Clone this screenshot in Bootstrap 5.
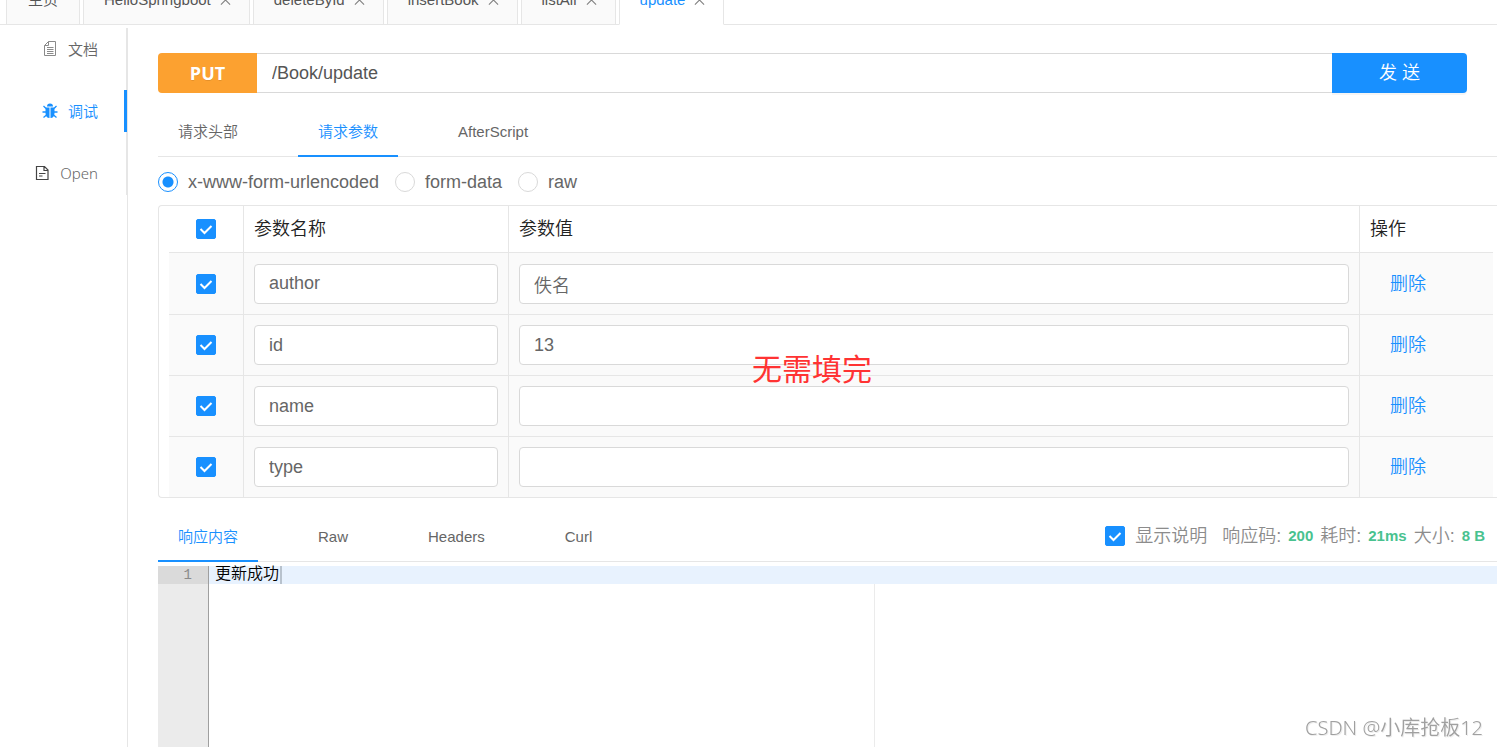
<!DOCTYPE html>
<html lang="zh-CN">
<head>
<meta charset="utf-8">
<meta name="viewport" content="width=device-width, initial-scale=1">
<title>update</title>
<link href="https://cdn.jsdelivr.net/npm/bootstrap@5.3.0/dist/css/bootstrap.min.css" rel="stylesheet">
<style>
:root { --ui-blue: #1890ff; --ui-line: #e6e6e6; --ui-text: #666; }
body { font-family: "Liberation Sans", "Noto Sans CJK SC", sans-serif; font-size: 18px; line-height: 24px; font-weight: 350; color: var(--ui-text); background: #fff; }
a { color: inherit; text-decoration: none; }
.shell { height: 100vh; overflow: hidden; }

/* open documents, scrolled half out of view */
.doc-bar { height: 25px; overflow: hidden; padding-left: 6px; font-size: 15px; background: linear-gradient(var(--ui-line), var(--ui-line)) bottom / 100% 1px no-repeat; }
.doc-tabs { height: 50px; gap: 3px; }
.doc-tab { height: 50px; padding: 0 18px 0 20px; border: 1px solid var(--ui-line); background: #fafafa; gap: 9px; white-space: nowrap; color: #555; }
.doc-tab.home { padding: 0 21px; }
.doc-tab.current { background: #fff; color: var(--ui-blue); border-bottom-color: #fff; }
.close-x { width: 11px; height: 12px; padding: 0; border: 0; background: none; color: #808080; line-height: 0; }

.side { width: 128px; border-right: 1px solid var(--ui-line); margin-top: 3px; }
.side-menu { border-right: 1px solid var(--ui-line); padding-bottom: 1px; gap: 20px; }
.side-link { height: 42px; gap: 10px; margin-right: -1px; padding-right: 26px; font-size: 15px; border-right: 3px solid transparent; font-family: "Noto Sans", "Noto Sans CJK SC", sans-serif; }
.side-link.current { color: var(--ui-blue); border-right-color: var(--ui-blue); }

.work { padding-left: 30px; min-width: 0; }
.url-row { margin: 28px 30px 14px 0; height: 40px; }
.method { width: 99px; background: #fca130; color: #fff; font: 700 18px/24px "Open Sans", sans-serif; border-radius: 4px 0 0 4px; text-shadow: 0 1px 0 rgba(0,0,0,.1); }
.url-box { border: 1px solid #d9d9d9; border-width: 1px 0; padding: 0 15px; min-width: 0; color: #555; font-weight: 350; }
.send { width: 135px; border: 0; border-radius: 0 4px 4px 0; background: var(--ui-blue); color: #fff; box-shadow: 0 2px 0 rgba(0,0,0,.04); font-weight: 350; font-size: 18px; }

.tab-row { height: 50px; border-bottom: 1px solid var(--ui-line); gap: 40px; font-size: 15px; }
.tab-link { padding: 2px 20px 0; height: 50px; border-bottom: 2px solid transparent; white-space: nowrap; }
.tab-link.current { color: var(--ui-blue); border-color: var(--ui-blue); }

.modes { height: 48px; padding-top: 2px; gap: 16px; }
.modes label, .status label { gap: 10px; }
.modes .form-check-input, .tick { width: 20px; height: 20px; margin: 0; flex: none; border-color: #d9d9d9; }
.modes .form-check-input:checked { background-color: #fff; border-color: var(--ui-blue); background-image: radial-gradient(circle, var(--ui-blue) 0 5px, transparent 6px); }
.tick.form-check-input { border-radius: 2px; }
.tick.form-check-input:checked { background-color: var(--ui-blue); border-color: var(--ui-blue); background-size: 18px; background-image: url("data:image/svg+xml,%3csvg xmlns='http://www.w3.org/2000/svg' viewBox='0 0 18 18'%3e%3cpath fill='none' stroke='%23fff' stroke-width='2' d='M3.5 9l4 4L14.500 6'/%3e%3c/svg%3e"); }

.grid-box { border: 1px solid var(--ui-line); border-right: 0; border-radius: 4px 0 0 4px; padding: 0 4px 0 10px; }
.params { table-layout: fixed; margin: 0; width: 100%; border-collapse: separate; border-spacing: 0; }
.params th { height: 47px; padding: 0 10px; font-weight: 350; color: #222; border-bottom: 1px solid var(--ui-line); }
.params td { height: 61px; padding: 0 10px; background: #fafafa; border-bottom: 1px solid var(--ui-line); }
.params tr:first-child td { height: 62px; }
.params tr:last-child td { height: 60px; border-bottom: 0; }
.params th:not(:last-child), .params td:not(:last-child) { border-right: 1px solid var(--ui-line); }
.params .tick { display: block; margin: 0 auto; }
.c-tick { width: 75px; } .c-name { width: 265px; } .c-act { width: 133px; }
.cell-box { display: block; width: 100%; height: 40px; border: 1px solid #d9d9d9; border-radius: 4px; padding: 0 14px; color: var(--ui-text); background: #fff; font-weight: 350; }
.drop { color: var(--ui-blue); padding-left: 20px; }
.note { left: 593px; top: 146px; font-size: 30px; line-height: 36px; font-weight: 400; color: #ff3333; white-space: nowrap; pointer-events: none; }

.answer { margin-top: 14px; }
.status { color: #8c8c8c; padding: 0 12px 2px 0; gap: 7px; font-size: 18px; white-space: nowrap; }
.status label { margin-right: 8px; }
.status strong { color: #49c28f; font-size: 15px; font-weight: 700; }
.editor { margin-top: 4px; font-family: "Liberation Mono", "Noto Sans CJK SC", monospace; line-height: 18px; }
.gutter { width: 51px; background: #ebebeb; border-right: 1px solid #9f9f9f; color: #8a8a8a; font-size: 14px; }
.gutter div { background: #dadada; padding-right: 16px; }
.active-line { height: 18px; background: #e8f2fe; padding-left: 6px; gap: 1px; color: #000; font-size: 16px; }
.caret { width: 2px; height: 18px; background: #b8c2cd; }
.margin-line { width: 666px; border-right: 1px solid #ebebeb; }
.stamp { right: 14px; bottom: 7px; font: 350 20px/24px "Noto Sans", "Noto Sans CJK SC", sans-serif; color: #a0a0a0; text-shadow: 1px 1px 0 #eee; }
</style>
</head>
<body>
<svg class="d-none" aria-hidden="true">
  <symbol id="x" viewBox="0 0 12 12"><path d="M1 1l10 10M11 1L1 11" fill="none" stroke="currentColor" stroke-width="1.2"/></symbol>
</svg>
<div class="shell d-flex flex-column">
  <header class="doc-bar d-flex align-items-end flex-shrink-0">
    <nav class="doc-tabs d-flex flex-shrink-0">
      <div class="doc-tab home d-flex align-items-center"><a href="#">主页</a></div>
      <div class="doc-tab d-flex align-items-center"><a href="#">HelloSpringboot</a><button class="close-x" aria-label="关闭"><svg width="11" height="12"><use href="#x"/></svg></button></div>
      <div class="doc-tab d-flex align-items-center"><a href="#">deleteById</a><button class="close-x" aria-label="关闭"><svg width="11" height="12"><use href="#x"/></svg></button></div>
      <div class="doc-tab d-flex align-items-center"><a href="#">insertBook</a><button class="close-x" aria-label="关闭"><svg width="11" height="12"><use href="#x"/></svg></button></div>
      <div class="doc-tab d-flex align-items-center"><a href="#">listAll</a><button class="close-x" aria-label="关闭"><svg width="11" height="12"><use href="#x"/></svg></button></div>
      <div class="doc-tab current d-flex align-items-center"><a href="#">update</a><button class="close-x" aria-label="关闭"><svg width="11" height="12"><use href="#x"/></svg></button></div>
    </nav>
  </header>

  <div class="d-flex flex-grow-1">
    <aside class="side flex-shrink-0">
      <nav class="side-menu d-flex flex-column">
        <a href="#" class="side-link d-flex align-items-center justify-content-end">
          <svg width="15" height="16" viewBox="0 0 15 16" fill="none" stroke="#8a8a8a"><path d="M5.500 0.500h7v14h-11V4.500zM5.500 0.500v4h-4M4 6.500h6.500M4 8.500h6.500M4 10.500h6.500M4 12.500h6.500"/></svg>
          文档</a>
        <a href="#" class="side-link current d-flex align-items-center justify-content-end">
          <svg width="16" height="16" viewBox="0 0 16 16" fill="currentColor"><path d="M5 3.500a3 3 0 0 1 6 0zM3.500 4.500h4V15C5 15 3.500 13 3.500 10zM8.500 4.500h4V10c0 3-1.500 5-4 5z"/><path d="M1.500 3L4 5.500M14.500 3L12 5.500M0.500 9h4M15.500 9h-4M1.500 14.500L4.500 12M14.500 14.500L11.500 12" stroke="currentColor" stroke-width="1.300" fill="none"/></svg>
          调试</a>
        <a href="#" class="side-link d-flex align-items-center justify-content-end">
          <svg width="15" height="16" viewBox="0 0 15 16" fill="none" stroke="#444" stroke-width="1.200"><path d="M1.500 1.500h8L13 5v9.500H1.500zM9 1.500V5.500h4M4 8.500h6.500M4 11h3.500"/></svg>
          Open</a>
      </nav>
    </aside>

    <main class="work flex-grow-1 d-flex flex-column">
      <form class="url-row d-flex flex-shrink-0">
        <span class="method d-flex align-items-center justify-content-center flex-shrink-0">PUT</span>
        <input class="url-box flex-grow-1" type="text" value="/Book/update" aria-label="接口地址">
        <button class="send flex-shrink-0" type="button">发 送</button>
      </form>

      <nav class="tab-row d-flex flex-shrink-0">
        <a href="#" class="tab-link d-flex align-items-center">请求头部</a>
        <a href="#" class="tab-link current d-flex align-items-center">请求参数</a>
        <a href="#" class="tab-link d-flex align-items-center">AfterScript</a>
      </nav>

      <div class="modes d-flex align-items-center flex-shrink-0">
        <label class="d-flex align-items-center"><input class="form-check-input" type="radio" name="mode" checked>x-www-form-urlencoded</label>
        <label class="d-flex align-items-center"><input class="form-check-input" type="radio" name="mode">form-data</label>
        <label class="d-flex align-items-center"><input class="form-check-input" type="radio" name="mode">raw</label>
      </div>

      <div class="grid-box position-relative flex-shrink-0">
        <table class="params align-middle">
          <colgroup><col class="c-tick"><col class="c-name"><col><col class="c-act"></colgroup>
          <thead><tr><th><input class="form-check-input tick" type="checkbox" checked aria-label="全选"></th><th>参数名称</th><th>参数值</th><th>操作</th></tr></thead>
          <tbody>
            <tr><td><input class="form-check-input tick" type="checkbox" checked aria-label="author"></td><td><input class="cell-box" type="text" value="author" aria-label="参数名称"></td><td><input class="cell-box" type="text" value="佚名" aria-label="参数值"></td><td><a class="drop" href="#">删除</a></td></tr>
            <tr><td><input class="form-check-input tick" type="checkbox" checked aria-label="id"></td><td><input class="cell-box" type="text" value="id" aria-label="参数名称"></td><td><input class="cell-box" type="text" value="13" aria-label="参数值"></td><td><a class="drop" href="#">删除</a></td></tr>
            <tr><td><input class="form-check-input tick" type="checkbox" checked aria-label="name"></td><td><input class="cell-box" type="text" value="name" aria-label="参数名称"></td><td><input class="cell-box" type="text" aria-label="参数值"></td><td><a class="drop" href="#">删除</a></td></tr>
            <tr><td><input class="form-check-input tick" type="checkbox" checked aria-label="type"></td><td><input class="cell-box" type="text" value="type" aria-label="参数名称"></td><td><input class="cell-box" type="text" aria-label="参数值"></td><td><a class="drop" href="#">删除</a></td></tr>
          </tbody>
        </table>
        <div class="note position-absolute">无需填完</div>
      </div>

      <div class="answer tab-row d-flex flex-shrink-0">
        <a href="#" class="tab-link current d-flex align-items-center">响应内容</a>
        <a href="#" class="tab-link d-flex align-items-center">Raw</a>
        <a href="#" class="tab-link d-flex align-items-center">Headers</a>
        <a href="#" class="tab-link d-flex align-items-center">Curl</a>
        <div class="status ms-auto d-flex align-items-center">
          <label class="d-flex align-items-center"><input class="form-check-input tick" type="checkbox" checked>显示说明</label>
          <span>响应码:</span><strong>200</strong>
          <span>耗时:</span><strong>21ms</strong>
          <span>大小:</span><strong>8 B</strong>
        </div>
      </div>

      <div class="editor d-flex flex-grow-1">
        <div class="gutter text-end flex-shrink-0"><div>1</div></div>
        <div class="flex-grow-1 d-flex flex-column">
          <div class="active-line d-flex">更新成功<span class="caret"></span></div>
          <div class="margin-line flex-grow-1"></div>
        </div>
      </div>
    </main>
  </div>
</div>
<div class="stamp position-fixed">CSDN @小库抢板12</div>
<script src="https://cdn.jsdelivr.net/npm/bootstrap@5.3.0/dist/js/bootstrap.bundle.min.js"></script>
</body>
</html>
